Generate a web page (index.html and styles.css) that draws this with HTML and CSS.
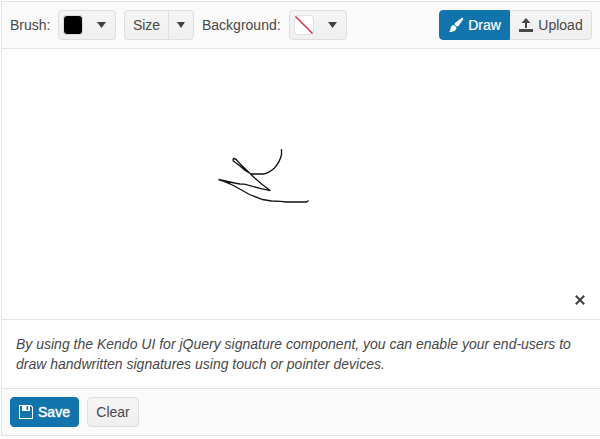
FILE: index.html
```
<!DOCTYPE html>
<html lang="en">
<head>
<meta charset="utf-8">
<title>Signature</title>
<link rel="stylesheet" href="styles.css">
</head>
<body>
<main class="card">
  <header class="toolbar">
    <span class="label brush-label">Brush:</span>
    <button class="btn picker"><span class="swatch black"></span><svg class="caret" width="9" height="6" viewBox="0 0 9 6"><path d="M0 0h9L4.500 6z"/></svg></button>
    <div class="split">
      <button class="btn size">Size</button><button class="btn arrow"><svg class="caret" width="8" height="6" viewBox="0 0 8 6"><path d="M0 0h8L4 6z"/></svg></button>
    </div>
    <span class="label background-label">Background:</span>
    <button class="btn picker"><span class="swatch none"><svg width="18" height="18" viewBox="0 0 18 18"><path d="M.5 .5l17 17"/></svg></span><svg class="caret" width="9" height="6" viewBox="0 0 9 6"><path d="M0 0h9L4.500 6z"/></svg></button>
    <div class="modes">
      <button class="btn primary draw"><svg width="16" height="16" viewBox="0 0 16 16"><path d="M15 1.2c.5.5.3 1-.1 1.6L10.3 9.2 8.8 9.6 6.6 7.4 7 6l6.3-4.8c.6-.4 1.200-.5 1.700 0zM6 8l2.300 2.300c.3 1.300-.2 2.400-1.200 3.300C5.600 14.800 3.300 15.200 1 14.700c1-.6 1.300-1.500 1.400-2.700C2.600 9.800 4 8 6 8z"/></svg><span>Draw</span></button><button class="btn upload"><svg width="16" height="16" viewBox="0 0 16 16"><path d="M1 12h14v3H1zM7 11V6H3.500L8 1l4.500 5H9v5z"/></svg><span>Upload</span></button>
    </div>
  </header>
  <section class="pad">
    <svg class="ink" width="598" height="270" viewBox="2 49 598 270"><path d="M281.500 149v5.500c-1 5-4 10-7 13.500-4 3.500-8 5.500-11 6h-12.500c-4-2-8-5-11-8l-6.500-5c-1-1-.5-2.500 1-2.500 2 .5 3.500 3 5.500 5.300l10 9.700c6 6 13 12 20.500 17.200l-9.500-2-16.500-4.500-4.500-.2-5.500-1-16-3.500c6 1.500 10 3.500 14 5.500l17 9.500 13 5 9 1.500 9 .3 6 .7h20l2-1.500"/></svg>
    <button class="clear-icon" aria-label="Clear signature"><svg width="10" height="10" viewBox="0 0 10 10"><path d="M.8.8l8.400 8.400M9.200.8L.8 9.200"/></svg></button>
  </section>
  <section class="note">By using the Kendo UI for jQuery signature component, you can enable your end-users to draw handwritten signatures using touch or pointer devices.</section>
  <footer class="actions">
    <button class="btn primary save"><svg width="16" height="16" viewBox="0 0 16 16"><path fill-rule="evenodd" d="M1 1h12l2 2v12H1zM2 2v12h12V3.500L12.500 2H12v5H4V2zM8.500 2v4H10V2z"/></svg><span>Save</span></button>
    <button class="btn clear">Clear</button>
  </footer>
</main>
</body>
</html>
```
FILE: styles.css
```
* { box-sizing: border-box; }
body {
  margin: 0;
  overflow: hidden;
  background: #fff;
  color: #484848;
  font: 14px/20px "Liberation Sans", Arial, sans-serif;
}
.card {
  width: 600px;
  height: 435px;
  margin: 1px 0 0 1px;
  border: 1px solid #e4e4e4;
  display: flex;
  flex-direction: column;
}
.toolbar {
  flex: 0 0 47px;
  width: 598px;
  display: flex;
  align-items: center;
  padding: 0 8px;
  background: #fafafa;
  border-bottom: 1px solid #e4e4e4;
}
.label { line-height: 30px; }
.brush-label { width: 48px; }
.background-label { width: 87px; margin-left: 8px; }
.btn {
  display: flex;
  align-items: center;
  justify-content: center;
  height: 30px;
  padding: 0;
  border: 1px solid #dedede;
  border-radius: 4px;
  background: linear-gradient(#f5f5f5, #efefef);
  color: #484848;
  font: inherit;
  white-space: nowrap;
}
.btn svg { flex: none; fill: currentColor; }
.btn .caret { fill: #404040; }
.picker {
  width: 58px;
  justify-content: flex-start;
  padding-left: 4px;
}
.swatch { width: 20px; height: 20px; border-radius: 4px; }
.black { background: #000; border: 1px solid #dcdcdc; }
.none { background: #fff; border: 1px solid #e0e0e0; }
.none svg { display: block; stroke: #d8202c; stroke-width: 1.2; }
.picker .caret { margin-left: 14px; }
.split { display: flex; margin-left: 8px; }
.size { width: 45px; border-radius: 4px 0 0 4px; }
.arrow { width: 26px; margin-left: -1px; border-radius: 0 4px 4px 0; }
.modes { display: flex; margin-left: auto; }
.btn.primary { background: #1274ac; border-color: #1274ac; color: #fff; }
.draw { width: 71px; gap: 4px; border-radius: 4px 0 0 4px; -webkit-text-stroke: 0.2px #fff; }
.upload { width: 82px; gap: 4px; border-left: 0; border-radius: 0 4px 4px 0; }
.pad { position: relative; flex: 0 0 270px; width: 598px; }
.ink { display: block; fill: none; stroke: #111; stroke-width: 1.3; }
.clear-icon {
  position: absolute;
  right: 8px;
  bottom: 6px;
  width: 24px;
  height: 26px;
  padding: 0;
  border: 0;
  background: none;
  display: flex;
  align-items: center;
  justify-content: center;
}
.clear-icon svg { fill: none; stroke: #424242; stroke-width: 2.100; }
.note {
  flex: 0 0 69px;
  width: 598px;
  padding: 14px;
  border-top: 1px solid #e4e4e4;
  font-style: italic;
}
.actions {
  flex: 1;
  display: flex;
  align-items: flex-start;
  gap: 8px;
  padding: 8px;
  border-top: 1px solid #e4e4e4;
  background: #fafafa;
}
.save { width: 69px; padding-right: 1px; gap: 4px; -webkit-text-stroke: 0.4px #fff; }
.clear { width: 52px; }
```
